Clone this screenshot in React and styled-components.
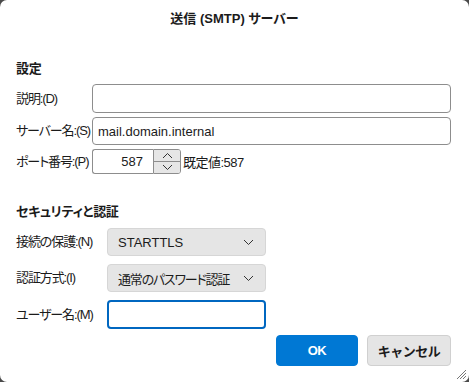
import React from "react";
import styled, { createGlobalStyle } from "styled-components";

const GlobalStyle = createGlobalStyle`
  html, body {
    margin: 0;
    padding: 0;
    background: #4a4a4a;
  }
  body {
    font-family: "Liberation Sans", "Noto Sans CJK JP", sans-serif;
    font-feature-settings: "palt";
    font-size: 13px;
    color: #1b1b1b;
  }
`;

const Dialog = styled.div`
  position: relative;
  width: 469px;
  height: 382px;
  background: #ffffff;
  border-radius: 7px;
  overflow: hidden;
  display: flex;
  flex-direction: column;
  box-sizing: border-box;
`;

const TitleBar = styled.div`
  height: 34px;
  display: flex;
  align-items: center;
  justify-content: center;
  font-size: 13px;
  font-weight: 700;
  color: #1b1b1b;
`;

const Body = styled.div`
  padding: 25px 18px 0 16px;
  display: flex;
  flex-direction: column;
`;

const Heading = styled.div`
  font-weight: 700;
  font-size: 13px;
  line-height: 20px;
  letter-spacing: -0.3px;
  margin-bottom: ${(p) => p.$mb || 5}px;
  margin-top: ${(p) => p.$mt || 0}px;
`;

const FormGrid = styled.div`
  display: grid;
  grid-template-columns: ${(p) => p.$label}px 1fr;
  align-items: center;
  row-gap: ${(p) => p.$gap || 4}px;
`;

const Label = styled.label`
  white-space: nowrap;
  line-height: 18px;
  letter-spacing: -1.1px;
`;

const TextInput = styled.input`
  box-sizing: border-box;
  height: ${(p) => p.$h || 29}px;
  width: ${(p) => (p.$w ? p.$w + "px" : "100%")};
  border: ${(p) => (p.$focus ? "2px solid #0067c0" : "1px solid #8d8d8d")};
  border-radius: 4px;
  padding: 0 ${(p) => (p.$focus ? 4 : 5)}px;
  font-family: inherit;
  font-size: 13px;
  color: #1b1b1b;
  background: #fff;
  outline: none;
`;

const PortRow = styled.div`
  display: flex;
  align-items: center;
`;

const NumberBox = styled.input`
  box-sizing: border-box;
  width: 61px;
  height: 25px;
  border: 1px solid #8d8d8d;
  border-right: none;
  border-radius: 3px 0 0 3px;
  text-align: right;
  padding: 0 10px 0 0;
  font-family: inherit;
  font-size: 13px;
  color: #1b1b1b;
  outline: none;
`;

const Spinner = styled.div`
  box-sizing: border-box;
  width: 28px;
  height: 25px;
  border: 1px solid #8d8d8d;
  border-radius: 0 3px 3px 0;
  display: flex;
  flex-direction: column;
  overflow: hidden;
`;

const SpinHalf = styled.div`
  flex: 1;
  display: flex;
  align-items: center;
  justify-content: center;
  background: #e6e6e6;
  border-top: ${(p) => (p.$bottom ? "1px solid #8d8d8d" : "none")};
`;

const Hint = styled.span`
  margin-left: 2px;
  letter-spacing: -0.5px;
`;

const Select = styled.div`
  box-sizing: border-box;
  width: 159px;
  height: 28px;
  background: #e5e5e5;
  border: 1px solid #d6d6d6;
  border-radius: 4px;
  display: flex;
  align-items: center;
  justify-content: space-between;
  padding: 0 11px 0 10px;
  white-space: nowrap;
`;

const SelectText = styled.span`
  letter-spacing: ${(p) => (p.$cjk ? -1.2 : 0)}px;
`;

const Footer = styled.div`
  display: flex;
  justify-content: flex-end;
  gap: 9px;
  padding: 6px 18px 0 0;
`;

const Button = styled.button`
  box-sizing: border-box;
  width: ${(p) => p.$w}px;
  height: 31px;
  border-radius: 4px;
  font-family: inherit;
  font-size: 13px;
  font-weight: 700;
  letter-spacing: -0.5px;
  border: 1px solid ${(p) => (p.$primary ? "#0078d4" : "#d0d0d0")};
  background: ${(p) => (p.$primary ? "#0078d4" : "#e5e5e5")};
  color: ${(p) => (p.$primary ? "#ffffff" : "#1b1b1b")};
`;

const Grip = styled.svg`
  position: absolute;
  right: 2px;
  bottom: 2px;
`;

const Chevron = ({ up }) => (
  <svg width="11" height="7" viewBox="0 0 11 7">
    <path
      d={up ? "M1 6 L5.5 1.5 L10 6" : "M1 1 L5.5 5.5 L10 1"}
      fill="none"
      stroke="#333"
      strokeWidth="1"
    />
  </svg>
);

export default function App() {
  return (
    <>
      <GlobalStyle />
      <Dialog>
        <TitleBar>送信 (SMTP) サーバー</TitleBar>
        <Body>
          <Heading>設定</Heading>
          <FormGrid $label={76}>
            <Label>説明:(D)</Label>
            <TextInput $h={29} />
            <Label>サーバー名:(S)</Label>
            <TextInput $h={28} defaultValue="mail.domain.internal" />
            <Label>ポート番号:(P)</Label>
            <PortRow>
              <NumberBox defaultValue="587" />
              <Spinner>
                <SpinHalf>
                  <Chevron up />
                </SpinHalf>
                <SpinHalf $bottom>
                  <Chevron />
                </SpinHalf>
              </Spinner>
              <Hint>既定値:587</Hint>
            </PortRow>
          </FormGrid>
          <Heading $mt={28} $mb={6}>セキュリティと認証</Heading>
          <FormGrid $label={91} $gap={8}>
            <Label>接続の保護:(N)</Label>
            <Select>
              <SelectText>STARTTLS</SelectText>
              <Chevron />
            </Select>
            <Label>認証方式:(I)</Label>
            <Select>
              <SelectText $cjk>通常のパスワード認証</SelectText>
              <Chevron />
            </Select>
            <Label>ユーザー名:(M)</Label>
            <TextInput $w={159} $h={29} $focus />
          </FormGrid>
        </Body>
        <Footer>
          <Button $primary $w={82}>OK</Button>
          <Button $w={84}>キャンセル</Button>
        </Footer>
        <Grip width="12" height="12" viewBox="0 0 12 12">
          <path d="M11 2 L2 11 M11 5 L5 11 M11 8 L8 11" stroke="#777" strokeWidth="1" />
        </Grip>
      </Dialog>
    </>
  );
}
